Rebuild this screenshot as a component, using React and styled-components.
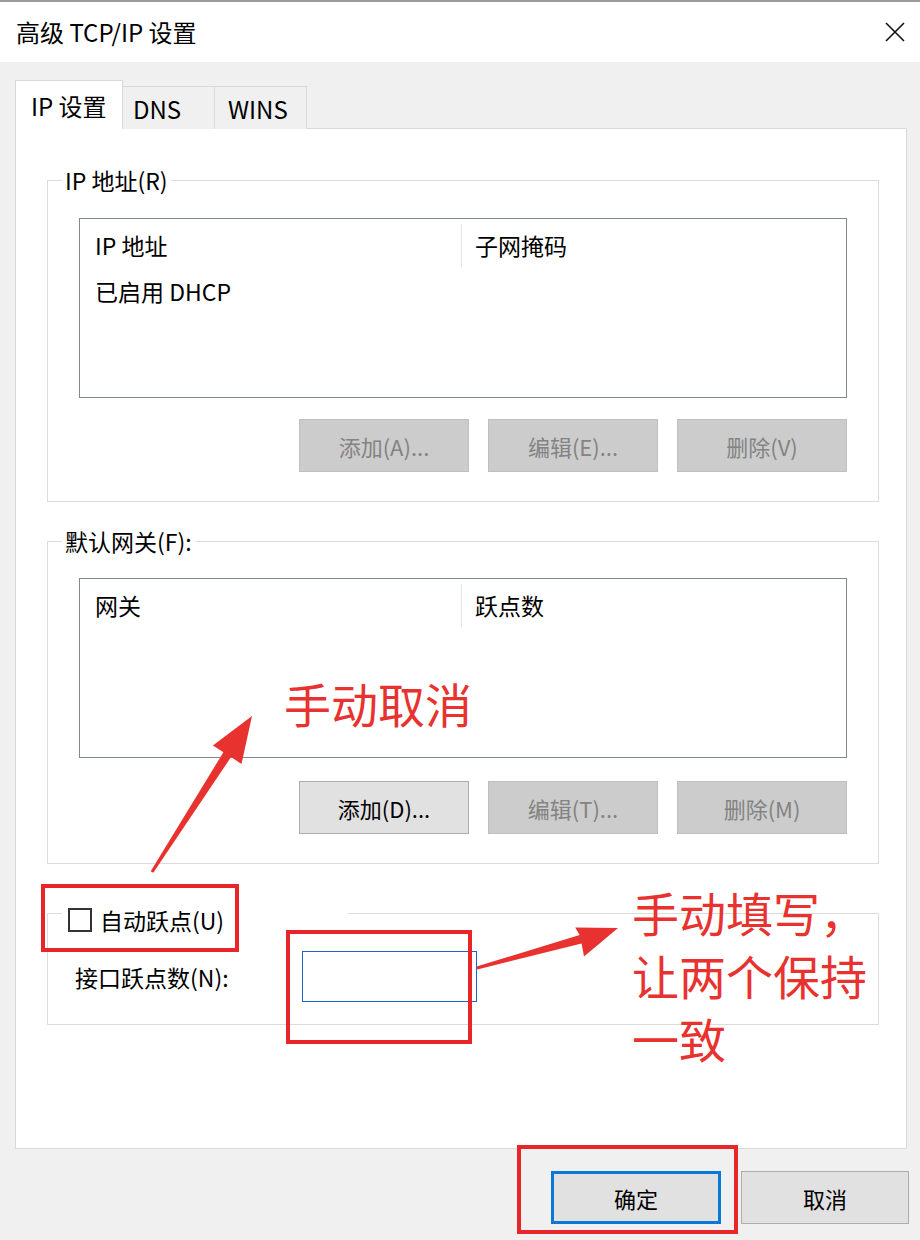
import React from 'react';
import styled, { createGlobalStyle } from 'styled-components';

const GlobalStyle = createGlobalStyle`
  body {
    margin: 0;
    background: #f0f0f0;
    font-family: "Noto Sans CJK SC", "Noto Sans", sans-serif;
  }
`
const Window = styled.div`
  position: relative;
  width: 920px;
  height: 1240px;
  overflow: hidden;
  background: #f0f0f0;
  color: #000;
  font-size: 23px;
`
//Title
const TitleBar = styled.div`
  height: 62px;
  box-sizing: border-box;
  border-top: 2px solid #9a9a9a;
  background: #ffffff;
  display: flex;
  align-items: center;
  justify-content: space-between;
  padding: 0 14px 0 16px;
  font-size: 24px;
  line-height: 30px;
`
const Body = styled.div`
  padding-top: 18px;
`
//Tabs
const TabRow = styled.div`
  display: flex;
  align-items: flex-end;
  height: 49px;
  margin: 0 0 -1px 15px;
`
const Tab = styled.div`
  position: relative;
  z-index: 1;
  box-sizing: border-box;
  width: ${p => p.$w}px;
  height: ${p => p.$active ? 49 : 43}px;
  padding-left: ${p => p.$pad}px;
  display: flex;
  align-items: center;
  background: ${p => p.$active ? "#ffffff" : "#f0f0f0"};
  border: 1px solid #d9d9d9;
  border-bottom: none;
  border-left: ${p => p.$active ? "1px solid #d9d9d9" : "none"};
  font-size: 24px;
`
const Panel = styled.div`
  margin-left: 15px;
  width: 892px;
  height: 1021px;
  box-sizing: border-box;
  border: 1px solid #d9d9d9;
  background: #ffffff;
  padding: 37px 0 0 31px;
`
//Group boxes
const GroupBox = styled.fieldset`
  margin: ${p => p.$top || 0}px 0 0;
  padding: 0;
  width: 832px;
  min-width: 0;
  box-sizing: border-box;
  border: 1px solid #dcdcdc;
`
const Legend = styled.legend`
  margin-left: 14px;
  padding: 0 3px;
  line-height: 28px;
  font-size: 23px;
`
const CheckLegend = styled.legend`
  margin-left: 14px;
  padding: 14px 0 0 6px;
  width: 286px;
  height: 42px;
  box-sizing: border-box;
  display: flex;
  align-items: center;
  gap: 8px;
  line-height: 28px;
  font-size: 23px;
`
const CheckBox = styled.span`
  width: 24px;
  height: 24px;
  box-sizing: border-box;
  border: 2px solid #333333;
  background: #ffffff;
`
const GroupBody = styled.div`
  padding: ${p => p.$top}px 31px ${p => p.$bottom}px;
`
//Lists
const ListBox = styled.div`
  height: 180px;
  box-sizing: border-box;
  border: 1px solid #828790;
  background: #ffffff;
`
const ListHeader = styled.div`
  display: flex;
  align-items: center;
  height: 52px;
`
const HeaderCell = styled.div`
  width: ${p => p.$w ? p.$w + "px" : "auto"};
  height: 43px;
  box-sizing: border-box;
  padding-left: ${p => p.$pad}px;
  display: flex;
  align-items: center;
  border-right: ${p => p.$divider ? "1px solid #e5e5e5" : "none"};
`
const ListRow = styled.div`
  height: 40px;
  padding-left: 15px;
  display: flex;
  align-items: center;
`
//Buttons
const ButtonRow = styled.div`
  display: flex;
  justify-content: flex-end;
  gap: 19px;
  margin-top: ${p => p.$top}px;
`
const DlgButton = styled.button`
  width: ${p => p.$w || 170}px;
  height: 53px;
  box-sizing: border-box;
  padding: 0;
  font-family: inherit;
  font-size: 22px;
  background: ${p => p.disabled ? "#cccccc" : "#e1e1e1"};
  color: ${p => p.disabled ? "#838383" : "#000000"};
  border: ${p => p.$primary ? "3px solid #0a78d6" : p.disabled ? "1px solid #bfbfbf" : "1px solid #adadad"};
`
//Metric
const MetricRow = styled.div`
  display: flex;
  align-items: center;
  padding: 17px 0 22px 27px;
`
const MetricLabel = styled.span`
  width: 227px;
`
const MetricInput = styled.div`
  width: 175px;
  height: 51px;
  box-sizing: border-box;
  border: 1px solid #1f63c6;
  background: #ffffff;
`
const Footer = styled.div`
  display: flex;
  justify-content: flex-end;
  gap: 20px;
  padding: 22px 11px 0 0;
`
//Annotations
const Overlay = styled.div`
  position: absolute;
  inset: 0;
  pointer-events: none;
`
const RedBox = styled.div`
  position: absolute;
  left: ${p => p.$x}px;
  top: ${p => p.$y}px;
  width: ${p => p.$w}px;
  height: ${p => p.$h}px;
  box-sizing: border-box;
  border: 4px solid #e8262a;
`
const Note = styled.div`
  position: absolute;
  left: ${p => p.$x}px;
  top: ${p => p.$y}px;
  color: #e8322f;
  font-size: 47px;
  line-height: 63px;
  white-space: pre;
`
const ArrowLayer = styled.svg`
  position: absolute;
  left: 0;
  top: 0;
`

function CloseIcon() {
  return (
    <svg width="22" height="22" viewBox="0 0 22 22">
      <path d="M2 2 L20 20 M20 2 L2 20" stroke="#111" strokeWidth="1.6" fill="none" />
    </svg>
  );
}

function Buttons(props) {
  return (
    <ButtonRow $top={props.top}>
      {props.items.map(item => (
        <DlgButton key={item.label} disabled={item.disabled}>{item.label}</DlgButton>
      ))}
    </ButtonRow>
  );
}

function AddressList(props) {
  return (
    <ListBox>
      <ListHeader>
        <HeaderCell $w={382} $pad={15} $divider>{props.cols[0]}</HeaderCell>
        <HeaderCell $pad={13}>{props.cols[1]}</HeaderCell>
      </ListHeader>
      {props.rows.map(r => <ListRow key={r}>{r}</ListRow>)}
    </ListBox>
  );
}

function Annotations() {
  return (
    <Overlay>
      <RedBox $x={41} $y={884} $w={198} $h={68} />
      <RedBox $x={286} $y={930} $w={186} $h={114} />
      <RedBox $x={517} $y={1145} $w={221} $h={89} />
      <Note $x={284} $y={671}>手动取消</Note>
      <Note $x={632} $y={880}>{"手动填写，\n让两个保持\n一致"}</Note>
      <ArrowLayer width="920" height="1240" viewBox="0 0 920 1240">
        <polygon
          fill="#e8322f"
          points="153.3,872.8 231.0,757.1 241.5,763.9 252,716 212.9,745.5 223.4,752.3 150.7,871.2"
        />
        <polygon
          fill="#e8322f"
          points="477.4,969.4 581.6,943.6 584.0,956.4 618,928 575.2,927.6 579.6,935.0 476.6,966.6"
        />
      </ArrowLayer>
    </Overlay>
  );
}

function App() {
  return (
    <Window>
      <GlobalStyle />
      <TitleBar>
        <span>高级 TCP/IP 设置</span>
        <CloseIcon />
      </TitleBar>
      <Body>
        <TabRow>
          <Tab $w={108} $pad={15} $active>IP 设置</Tab>
          <Tab $w={92} $pad={10}>DNS</Tab>
          <Tab $w={92} $pad={13}>WINS</Tab>
        </TabRow>
        <Panel>
          <GroupBox>
            <Legend>IP 地址(R)</Legend>
            <GroupBody $top={24} $bottom={29}>
              <AddressList cols={["IP 地址", "子网掩码"]} rows={["已启用 DHCP"]} />
              <Buttons
                top={21}
                items={[
                  { label: "添加(A)...", disabled: true },
                  { label: "编辑(E)...", disabled: true },
                  { label: "删除(V)", disabled: true },
                ]}
              />
            </GroupBody>
          </GroupBox>
          <GroupBox $top={25}>
            <Legend>默认网关(F):</Legend>
            <GroupBody $top={23} $bottom={29}>
              <AddressList cols={["网关", "跃点数"]} rows={[]} />
              <Buttons
                top={23}
                items={[
                  { label: "添加(D)...", disabled: false },
                  { label: "编辑(T)...", disabled: true },
                  { label: "删除(M)", disabled: true },
                ]}
              />
            </GroupBody>
          </GroupBox>
          <GroupBox $top={28}>
            <CheckLegend>
              <CheckBox />
              <span>自动跃点(U)</span>
            </CheckLegend>
            <MetricRow>
              <MetricLabel>接口跃点数(N):</MetricLabel>
              <MetricInput />
            </MetricRow>
          </GroupBox>
        </Panel>
        <Footer>
          <DlgButton $primary $w={170}>确定</DlgButton>
          <DlgButton $w={168}>取消</DlgButton>
        </Footer>
      </Body>
      <Annotations />
    </Window>
  );
}

export default App;
